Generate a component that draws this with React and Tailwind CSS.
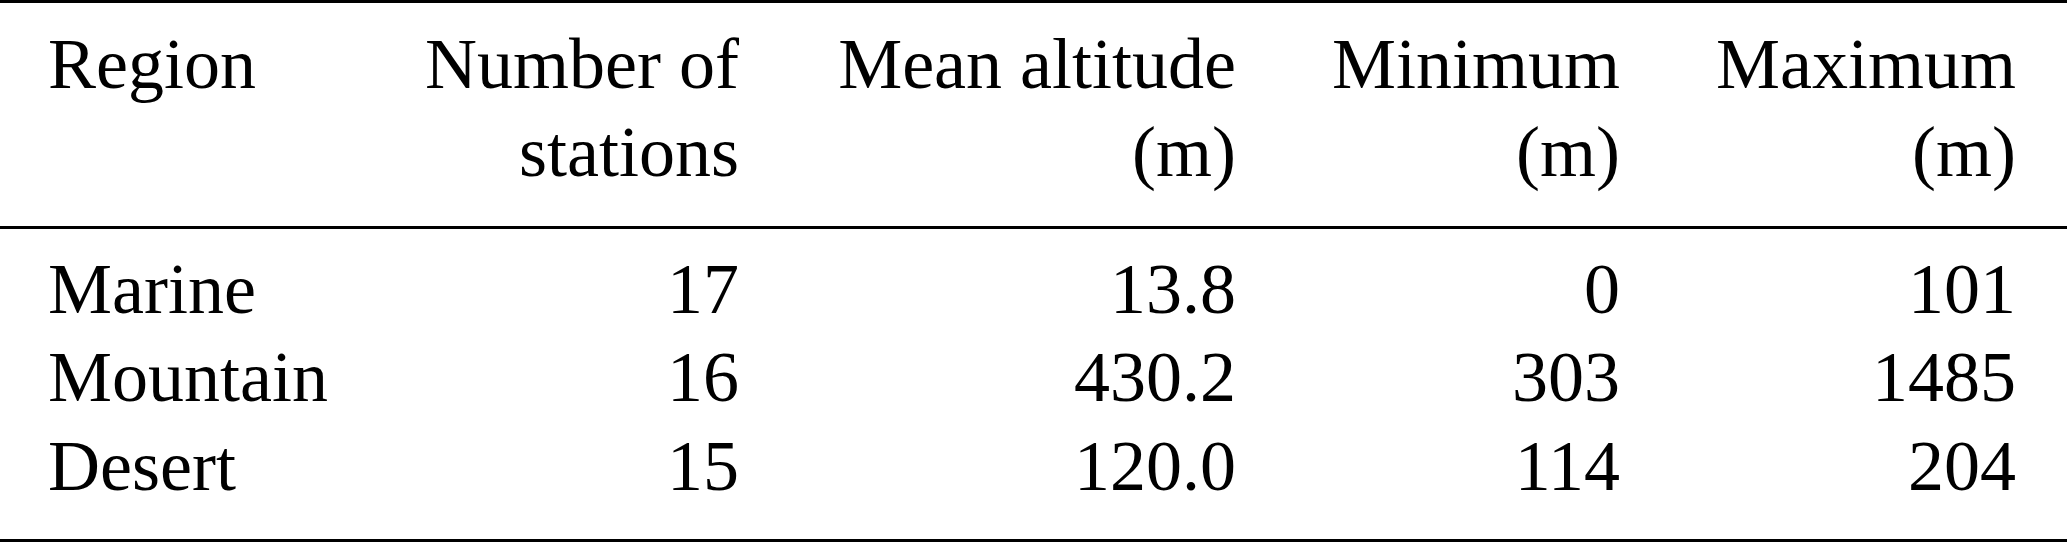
import React from "react";

const rows = [
    { region: "Marine", stations: "17", mean: "13.8", min: "0", max: "101" },
    { region: "Mountain", stations: "16", mean: "430.2", min: "303", max: "1485" },
    { region: "Desert", stations: "15", mean: "120.0", min: "114", max: "204" },
];

const gridCols = "grid grid-cols-[377px_410px_497px_384px_396px]";

const App = () => {
    return (
        <div className="w-[2067px] bg-white text-black font-['Liberation_Serif',serif] text-[72px] leading-[88.5px]">
            {/* header */}
            <div className="border-t-[3px] border-b-[3px] border-black pt-[16.5px] pb-[29.5px]">
                <div className={gridCols}>
                    <div className="pl-[48px] text-left">Region</div>
                    <div className="pr-[48px] text-right">
                        Number of
                        <br />
                        stations
                    </div>
                    <div className="pr-[48px] text-right">
                        Mean altitude
                        <br />
                        (m)
                    </div>
                    <div className="pr-[48px] text-right">
                        Minimum
                        <br />
                        (m)
                    </div>
                    <div className="pr-[48px] text-right">
                        Maximum
                        <br />
                        (m)
                    </div>
                </div>
            </div>

            {/* body */}
            <div className="border-b-[3px] border-black pt-[15.5px] pb-[29px]">
                {rows.map((row) => (
                    <div className={gridCols} key={row.region}>
                        <div className="pl-[48px] text-left">{row.region}</div>
                        <div className="pr-[48px] text-right">{row.stations}</div>
                        <div className="pr-[48px] text-right">{row.mean}</div>
                        <div className="pr-[48px] text-right">{row.min}</div>
                        <div className="pr-[48px] text-right">{row.max}</div>
                    </div>
                ))}
            </div>
        </div>
    );
};

export default App;
